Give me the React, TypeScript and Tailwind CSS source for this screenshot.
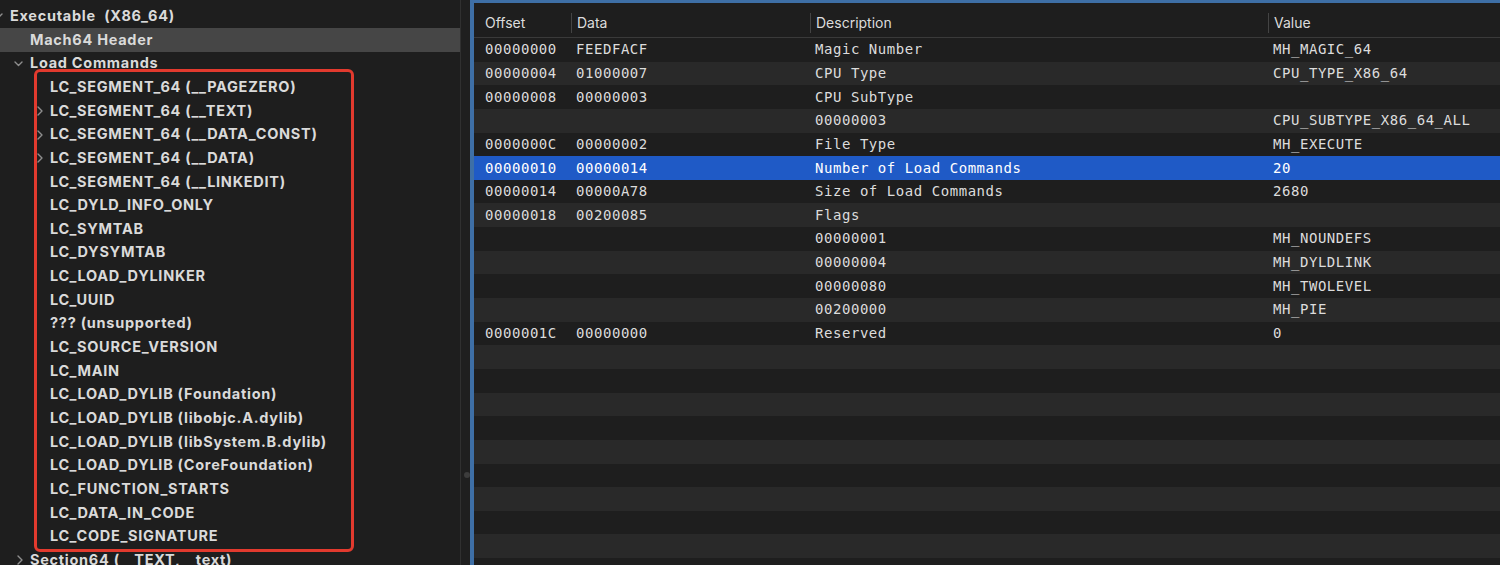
import React from "react";

type TreeItem = { label: string; level: 0 | 1 | 2; chevron?: "down" | "right"; selected?: boolean };

const tree: TreeItem[] = [
  { label: "Executable  (X86_64)", level: 0, chevron: "down" },
  { label: "Mach64 Header", level: 1, selected: true },
  { label: "Load Commands", level: 1, chevron: "down" },
  { label: "LC_SEGMENT_64 (__PAGEZERO)", level: 2 },
  { label: "LC_SEGMENT_64 (__TEXT)", level: 2, chevron: "right" },
  { label: "LC_SEGMENT_64 (__DATA_CONST)", level: 2, chevron: "right" },
  { label: "LC_SEGMENT_64 (__DATA)", level: 2, chevron: "right" },
  { label: "LC_SEGMENT_64 (__LINKEDIT)", level: 2 },
  { label: "LC_DYLD_INFO_ONLY", level: 2 },
  { label: "LC_SYMTAB", level: 2 },
  { label: "LC_DYSYMTAB", level: 2 },
  { label: "LC_LOAD_DYLINKER", level: 2 },
  { label: "LC_UUID", level: 2 },
  { label: "??? (unsupported)", level: 2 },
  { label: "LC_SOURCE_VERSION", level: 2 },
  { label: "LC_MAIN", level: 2 },
  { label: "LC_LOAD_DYLIB (Foundation)", level: 2 },
  { label: "LC_LOAD_DYLIB (libobjc.A.dylib)", level: 2 },
  { label: "LC_LOAD_DYLIB (libSystem.B.dylib)", level: 2 },
  { label: "LC_LOAD_DYLIB (CoreFoundation)", level: 2 },
  { label: "LC_FUNCTION_STARTS", level: 2 },
  { label: "LC_DATA_IN_CODE", level: 2 },
  { label: "LC_CODE_SIGNATURE", level: 2 },
  { label: "Section64 (__TEXT,__text)", level: 1, chevron: "right" },
];

const rows: [string, string, string, string][] = [
  ["00000000", "FEEDFACF", "Magic Number", "MH_MAGIC_64"],
  ["00000004", "01000007", "CPU Type", "CPU_TYPE_X86_64"],
  ["00000008", "00000003", "CPU SubType", ""],
  ["", "", "00000003", "CPU_SUBTYPE_X86_64_ALL"],
  ["0000000C", "00000002", "File Type", "MH_EXECUTE"],
  ["00000010", "00000014", "Number of Load Commands", "20"],
  ["00000014", "00000A78", "Size of Load Commands", "2680"],
  ["00000018", "00200085", "Flags", ""],
  ["", "", "00000001", "MH_NOUNDEFS"],
  ["", "", "00000004", "MH_DYLDLINK"],
  ["", "", "00000080", "MH_TWOLEVEL"],
  ["", "", "00200000", "MH_PIE"],
  ["0000001C", "00000000", "Reserved", "0"],
];

const EMPTY_ROWS = 11;

function Chevron({ dir }: { dir: "down" | "right" }) {
  if (dir === "down") {
    return (
      <svg width="9" height="6" viewBox="0 0 9 6" className="shrink-0">
        <polyline points="1,1 4.5,4.5 8,1" fill="none" stroke="#8e8e8e" strokeWidth="1.4" strokeLinecap="round" strokeLinejoin="round" />
      </svg>
    );
  }
  return (
    <svg width="6" height="10" viewBox="0 0 6 10" className="shrink-0">
      <polyline points="1,1 5,5 1,9" fill="none" stroke="#8e8e8e" strokeWidth="1.4" strokeLinecap="round" strokeLinejoin="round" />
    </svg>
  );
}

const indentClass: Record<number, string> = {
  0: "w-[10px]",
  1: "w-[30px]",
  2: "w-[50px]",
};

export default function App() {
  return (
    <div className="flex w-[1500px] h-[565px] overflow-hidden bg-[#1e1e1e]">
      {/* Left tree */}
      <div className="relative w-[460px] shrink-0 h-full bg-[#1e1e1e] pt-[4.5px] font-['Inter',sans-serif] font-bold text-[14.5px] tracking-[0.72px] text-[#dadada]">
        {tree.map((t, i) => (
          <div
            key={i}
            className={`flex items-center h-[23.65px] whitespace-pre ${t.selected ? "bg-[#464646]" : ""}`}
          >
            <span className={`${indentClass[t.level]} shrink-0 flex items-center justify-end pr-[7px]`}>
              {t.chevron ? <Chevron dir={t.chevron} /> : null}
            </span>
            <span className="leading-none">{t.label}</span>
          </div>
        ))}
        <div className="absolute left-[34px] top-[69px] w-[320px] h-[483px] border-[3px] border-[#e23a2e] rounded-[6px] pointer-events-none" />
      </div>

      {/* Divider */}
      <div className="relative w-[10px] shrink-0 h-full border-l border-[#303030] bg-[#1f1f1f]">
        <div className="absolute left-[3px] top-[472px] w-[6px] h-[6px] rounded-full bg-[#3c3c3c]" />
      </div>

      {/* Right table */}
      <div className="flex-1 h-full border-l-4 border-t-[3px] border-[#3e6fa6] bg-[#1e1e1e] overflow-hidden">
        <div className="grid grid-cols-[97px_239px_458px_1fr] h-[35px] pt-[5px] items-center border-b border-[#3a3a3a] font-['Inter',sans-serif] text-[14px] text-[#dcdcdc]">
          <div className="pl-[11px]">Offset</div>
          <div className="pl-[5px] border-l border-[#444444] h-[20px] flex items-center">Data</div>
          <div className="pl-[5px] border-l border-[#444444] h-[20px] flex items-center">Description</div>
          <div className="pl-[5px] border-l border-[#444444] h-[20px] flex items-center">Value</div>
        </div>
        {rows.map((r, i) => {
          const selected = i === 5;
          const bg = selected ? "bg-[#1f5ac6] text-white" : i % 2 === 0 ? "bg-[#1e1e1e] text-[#dcdcdc]" : "bg-[#292929] text-[#dcdcdc]";
          return (
            <div
              key={i}
              className={`grid grid-cols-[97px_239px_458px_1fr] h-[23.65px] items-center font-['DejaVu_Sans_Mono',monospace] text-[14px] tracking-[0.55px] whitespace-pre ${bg}`}
            >
              <div className="pl-[11px]">{r[0]}</div>
              <div className="pl-[5px]">{r[1]}</div>
              <div className="pl-[5px]">{r[2]}</div>
              <div className="pl-[5px]">{r[3]}</div>
            </div>
          );
        })}
        {Array.from({ length: EMPTY_ROWS }).map((_, j) => {
          const i = rows.length + j;
          return <div key={`e${j}`} className={`h-[23.65px] ${i % 2 === 0 ? "bg-[#1e1e1e]" : "bg-[#292929]"}`} />;
        })}
      </div>
    </div>
  );
}
